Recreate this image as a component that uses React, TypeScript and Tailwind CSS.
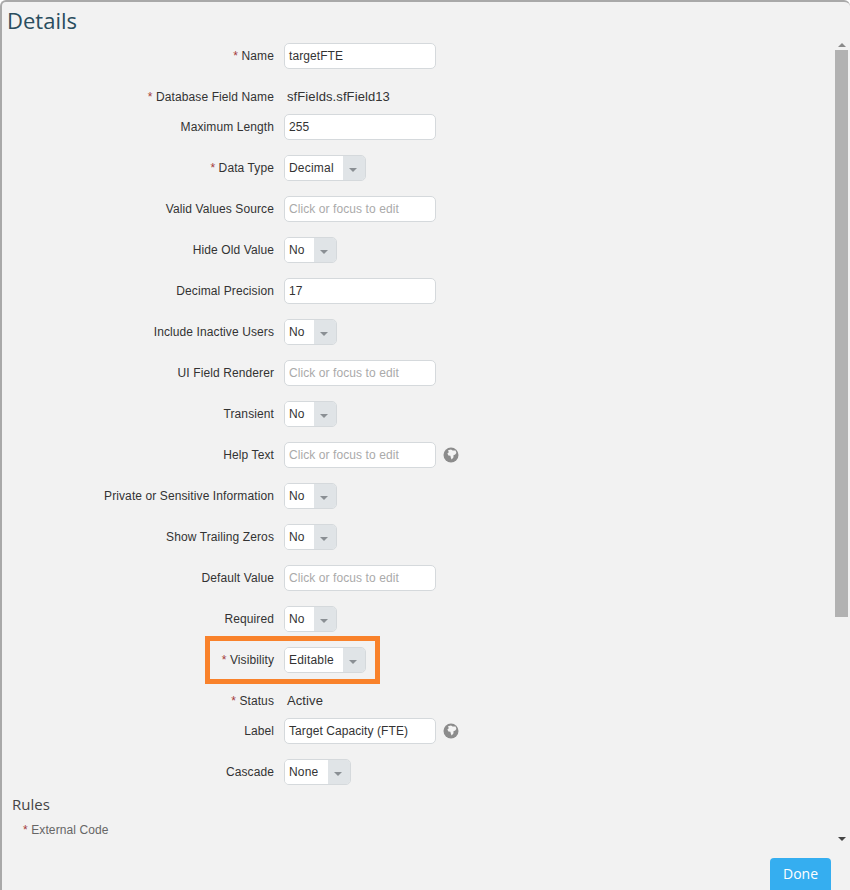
import React from 'react';

const sans = 'font-["Liberation_Sans",Arial,sans-serif]';

const Globe: React.FC = () => (
  <svg width="16" height="16" viewBox="0 0 16 16" className="ml-[7px] shrink-0">
    <circle cx="8" cy="8" r="7.5" fill="#8c8c8c" />
    <path d="M5 3.2 L8 2.4 L9.6 3.6 L12.6 3.4 L13.4 6 L12 7.8 L10.6 8 L10.4 10.4 L8.6 12.4 L7.8 10.4 L7.4 8.8 L5.4 8.4 L4.4 6.4 L5.8 5.2 Z" fill="#f4f4f4" />
  </svg>
);

const Label: React.FC<{ text: string; required?: boolean }> = ({ text, required }) => (
  <div className="w-[274px] text-right text-[12px] tracking-[0.1px] text-[#333] shrink-0">
    {required && <span className="text-[#a33a3a]">* </span>}
    {text}
  </div>
);

const TextRow: React.FC<{ label: string; value?: string; required?: boolean; help?: boolean }> = ({ label, value, required, help }) => (
  <div className="flex items-center h-[26px] mb-[15px]">
    <Label text={label} required={required} />
    <div className={`ml-[10px] w-[152px] h-[26px] bg-white border border-[#d5d9dc] rounded-[5px] px-[4px] flex items-center text-[12px] tracking-[0.08px] ${value ? 'text-[#333]' : 'text-[#aaa]'}`}>
      {value || 'Click or focus to edit'}
    </div>
    {help && <Globe />}
  </div>
);

const SelectRow: React.FC<{ label: string; value: string; width: string; required?: boolean }> = ({ label, value, width, required }) => (
  <div className="flex items-center h-[26px] mb-[15px]">
    <Label text={label} required={required} />
    <div className={`ml-[10px] ${width} h-[26px] flex border border-[#d5d9dc] rounded-[5px] overflow-hidden text-[12px] tracking-[0.2px] text-[#333]`}>
      <div className="flex-1 bg-white px-[4px] flex items-center">{value}</div>
      <div className="w-[22px] bg-[#e0e4e7] flex items-center justify-center">
        <span className="mt-[3px] -ml-[2px] w-0 h-0 border-x-[4px] border-x-transparent border-t-[4px] border-t-[#8a8f94]" />
      </div>
    </div>
  </div>
);

const StaticRow: React.FC<{ label: string; value: string }> = ({ label, value }) => (
  <div className="flex items-center h-[26px] mb-[4px]">
    <Label text={label} required />
    <div className="ml-[13px] text-[13px] tracking-[0.1px] text-[#333]">{value}</div>
  </div>
);

const App: React.FC = () => {
  return (
    <div className={`w-[850px] h-[890px] overflow-hidden bg-white ${sans}`}>
      <div className="h-full flex flex-col bg-[#f2f2f2] border-t-2 border-l-2 border-[#a9a9a9] rounded-tl-[6px] rounded-tr-[6px]">
        <h1 className='h-[35px] mb-[6px] pl-[5px] flex items-center text-[22px] leading-none text-[#2a4d5e] font-["Open_Sans",sans-serif]'>Details</h1>

        <div className="flex-1 flex min-h-0">
          <div className="flex-1 overflow-hidden">
            <div className="relative -ml-[2px]">
              <TextRow label="Name" value="targetFTE" required />
              <StaticRow label="Database Field Name" value="sfFields.sfField13" />
              <TextRow label="Maximum Length" value="255" />
              <SelectRow label="Data Type" value="Decimal" width="w-[82px]" required />
              <TextRow label="Valid Values Source" />
              <SelectRow label="Hide Old Value" value="No" width="w-[53px]" />
              <TextRow label="Decimal Precision" value="17" />
              <SelectRow label="Include Inactive Users" value="No" width="w-[53px]" />
              <TextRow label="UI Field Renderer" />
              <SelectRow label="Transient" value="No" width="w-[53px]" />
              <TextRow label="Help Text" help />
              <SelectRow label="Private or Sensitive Information" value="No" width="w-[53px]" />
              <SelectRow label="Show Trailing Zeros" value="No" width="w-[53px]" />
              <TextRow label="Default Value" />
              <SelectRow label="Required" value="No" width="w-[53px]" />
              <div className="relative">
                <SelectRow label="Visibility" value="Editable" width="w-[82px]" required />
                {/* orange highlight drawn on the screenshot */}
                <div className="absolute left-[205px] top-[-11px] w-[175px] h-[48px] border-[5px] border-[#f9822b]" />
              </div>
              <StaticRow label="Status" value="Active" />
              <TextRow label="Label" value="Target Capacity (FTE)" help />
              <SelectRow label="Cascade" value="None" width="w-[67px]" />
              <div className='pl-[12px] mt-[-8px] text-[15px] leading-[24px] text-[#444] font-["Open_Sans",sans-serif]'>Rules</div>
              <div className="pl-[23px] mt-[5px] text-[12px] tracking-[0.1px] text-[#666]">
                <span className="text-[#a33a3a]">* </span>External Code
              </div>
            </div>
          </div>

          {/* scrollbar */}
          <div className="w-[13px] mr-[2px] flex flex-col items-center">
            <span className="w-0 h-0 border-x-[4px] border-x-transparent border-b-[4px] border-b-[#8a8a8a]" />
            <div className="w-[13px] h-[567px] mt-[3px] bg-[#b2b2b2]" />
            <div className="flex-1" />
            <span className="w-0 h-0 mb-[13px] border-x-[4px] border-x-transparent border-t-[4px] border-t-[#444]" />
          </div>
        </div>

        <div className="h-[36px] flex justify-end pr-[19px] pt-[4px] shrink-0">
          <button className='w-[61px] h-[32px] pb-[2px] rounded-t-[4px] bg-[#35aef0] text-white text-[14px] font-["Open_Sans",sans-serif]'>Done</button>
        </div>
      </div>
    </div>
  );
};

export default App;
